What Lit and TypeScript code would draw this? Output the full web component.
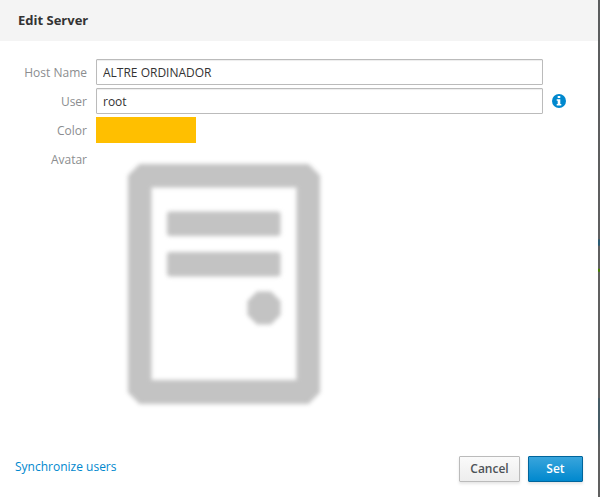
import { LitElement, html, css } from "lit";
import { customElement } from "lit/decorators.js";

@customElement("server-avatar")
class ServerAvatar extends LitElement {
  static styles = css`
    :host { display: block; width: 240px; height: 256px; }
    svg { display: block; }
  `;
  render() {
    return html`
      <svg width="240" height="256" viewBox="104 156 240 256">
        <defs>
          <filter id="soft" x="-10%" y="-10%" width="120%" height="120%" color-interpolation-filters="sRGB">
            <feGaussianBlur stdDeviation="2.3" />
          </filter>
        </defs>
        <g fill="#c3c3c3" filter="url(#soft)">
          <path fill-rule="evenodd" d="M139.500 164H308.500L320 175.500V392.500L308.500 404H139.500L128 392.500V175.500ZM151.500 187.500V380H296.500V187.500Z" />
          <rect x="167" y="211.500" width="113.500" height="24.500" rx="3" />
          <rect x="167" y="252" width="113.500" height="24.500" rx="3" />
          <path d="M257 291.500H271L280.500 301V315L271 324.500H257L247.500 315V301Z" />
        </g>
      </svg>
    `;
  }
}

@customElement("app-root")
class AppRoot extends LitElement {
  static styles = css`
    :host {
      display: flex;
      width: 600px;
      height: 497px;
      overflow: hidden;
      font: 12px/20px "Open Sans", "Noto Sans", sans-serif;
      color: #333;
    }
    .dialog { width: 598px; height: 497px; display: flex; flex-direction: column; background: #fff; }
    .backdrop { width: 2px; background: linear-gradient(#5b5d5e, #5f5f60 48%, #2b5c74 48.300%, #2b5c74 49.300%, #5f5f60 49.600%, #606060 54%, #488000 54.100%, #488000 54.600%, #606060 54.700%, #606060 80%, #465c66 80.200%, #465c66 86%, #606060 90%); }
    header { box-sizing: border-box; height: 41px; padding: 10px 18px; background: #f4f4f4; }
    h1 { margin: 0; font-size: 13px; line-height: 21px; font-weight: 700; }
    .form { flex: 1; padding-top: 18px; display: grid; grid-template-columns: 87px 447px 14px; column-gap: 9px; row-gap: 3px; grid-auto-rows: 26px; align-content: start; }
    label { grid-column: 1; text-align: right; line-height: 27px; color: #8b8d8f; }
    input { grid-column: 2; box-sizing: border-box; width: 447px; height: 26px; margin: 0; padding: 2px 6px; border: 1px solid #bbb; border-radius: 1px; font: inherit; color: #333; background: #fff; box-shadow: inset 0 1px 1px rgba(0, 0, 0, 0.075); outline: none; }
    .swatch { grid-column: 2; width: 100px; height: 26px; background: #ffbf00; }
    .info { align-self: center; display: block; }
    server-avatar { grid-column: 2; margin: 10px 0 0 8px; }
    footer { box-sizing: border-box; height: 41px; padding: 0 15px; display: flex; align-items: flex-start; gap: 8px; }
    a { margin-right: auto; color: #0088ce; line-height: 22px; }
    button { box-sizing: border-box; height: 26px; margin: 0; padding: 0; border: 1px solid #bbb; border-radius: 1px; font: 600 12px/20px "Open Sans", "Noto Sans", sans-serif; color: #4d5258; background: linear-gradient(#fafafa, #ededed); box-shadow: 0 2px 3px rgba(3, 3, 3, 0.1); }
    .cancel { width: 61px; }
    .set { width: 55px; color: #fff; border-color: #00659c; background: linear-gradient(#39a5dc, #0088ce); }
  `;
  render() {
    return html`
      <div class="dialog">
        <header><h1>Edit Server</h1></header>
        <div class="form">
          <label for="host">Host Name</label>
          <input id="host" type="text" value="ALTRE ORDINADOR" />
          <label for="user">User</label>
          <input id="user" type="text" value="root" />
          <svg class="info" width="14" height="14" viewBox="0 0 14 14">
            <circle cx="7" cy="7" r="7" fill="#0088ce" />
            <path fill="#fff" d="M5.700 2H8.300V4H5.700ZM4.700 5.200H8.300V10H9.300V11.600H4.700V10H5.700V6.800H4.700Z" />
          </svg>
          <label>Color</label>
          <div class="swatch"></div>
          <label>Avatar</label>
          <server-avatar></server-avatar>
        </div>
        <footer>
          <a>Synchronize users</a>
          <button class="cancel">Cancel</button>
          <button class="set">Set</button>
        </footer>
      </div>
      <div class="backdrop"></div>
    `;
  }
}
